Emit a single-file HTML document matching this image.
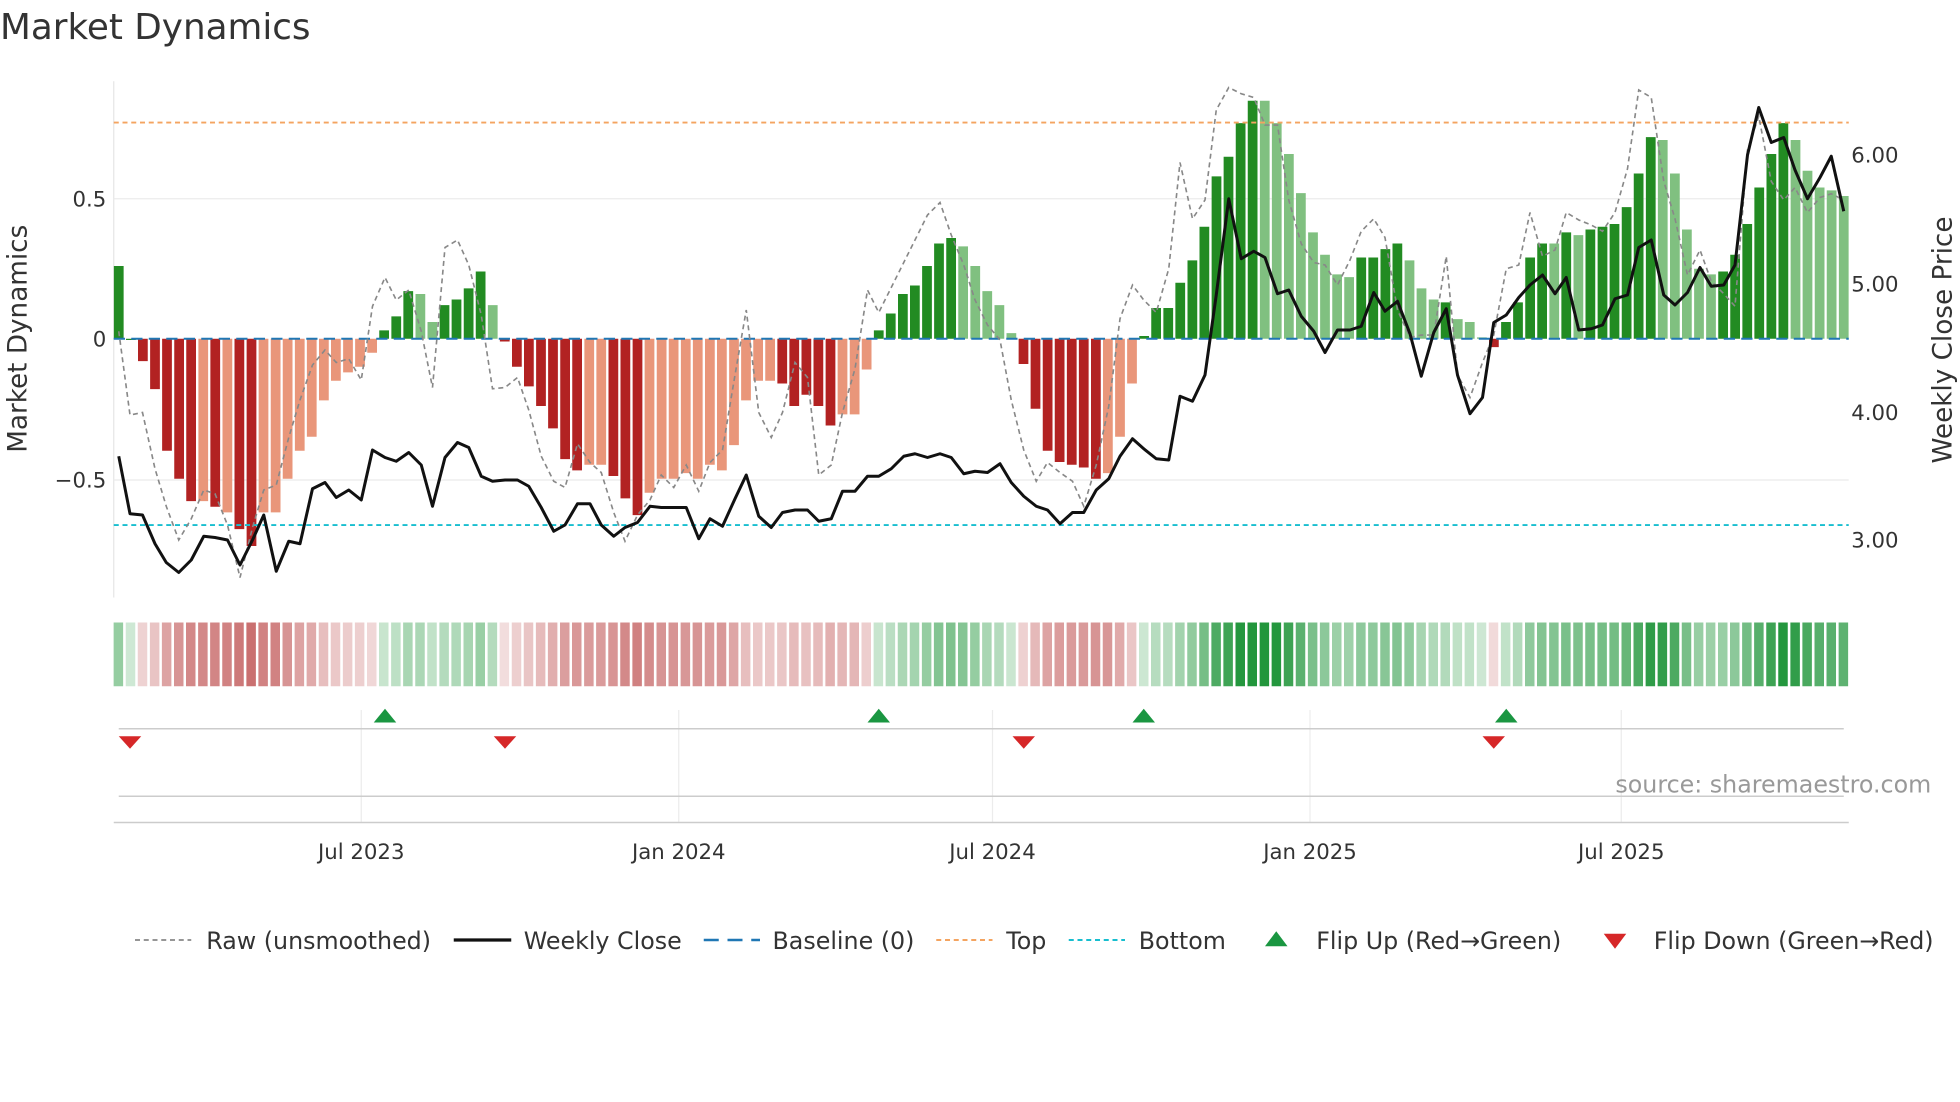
<!DOCTYPE html>
<html><head><meta charset="utf-8"><style>
html,body{margin:0;padding:0;background:#fff;overflow:hidden}
svg{display:block;font-family:"DejaVu Sans","Liberation Sans",sans-serif}
</style></head><body>
<svg id="s" width="1960" height="1102" viewBox="0 0 1568 881.6" xmlns="http://www.w3.org/2000/svg">
<rect width="1568" height="882" fill="#fff"/>
<text x="0" y="31" font-size="28.6" fill="#333">Market Dynamics</text>
<line x1="91" y1="65" x2="91" y2="478" stroke="#e6e6e6"/>
<line x1="91" y1="159" x2="1479" y2="159" stroke="#ebebeb"/>
<line x1="91" y1="384" x2="1479" y2="384" stroke="#ebebeb"/>
<g id="bars"></g>
<line x1="91" y1="271" x2="1479" y2="271" stroke="#1f77b4" stroke-width="1.6" stroke-dasharray="9,5"/>
<line x1="91" y1="98" x2="1479" y2="98" stroke="#f4a460" stroke-width="1.5" stroke-dasharray="4,3"/>
<line x1="91" y1="420" x2="1479" y2="420" stroke="#17becf" stroke-width="1.5" stroke-dasharray="4,3"/>
<polyline fill="none" stroke="#888" stroke-width="1.3" stroke-dasharray="4,3" points="95,265 104,332 114,330 124,375 133,405 143,432 153,415 163,392 172,395 182,420 192,462 202,422 211,392 221,388 231,350 240,320 250,292 260,280 269,290 279,287 289,304 298,245 308,222 317,240 327,232 337,265 346,310 356,198 366,192 375,212 385,252 394,311 404,310 414,302 423,328 433,365 443,385 452,390 462,355 472,370 481,378 491,410 500,433 510,412 520,400 529,380 539,390 549,372 559,393 568,370 578,360 588,300 597,248 607,330 617,350 626,330 636,290 646,302 655,380 665,372 674,330 684,295 694,232 703,250 713,230 723,210 732,192 742,172 752,162 761,188 771,212 780,240 790,260 800,272 809,320 819,360 829,385 838,370 848,378 858,385 867,405 877,372 887,325 896,255 906,228 915,240 925,250 935,215 944,130 954,175 964,160 973,88 983,70 993,75 1003,78 1012,100 1022,100 1031,160 1041,195 1051,210 1060,212 1070,228 1080,208 1089,185 1099,175 1108,190 1118,248 1128,270 1137,268 1147,268 1157,205 1166,300 1176,318 1186,290 1195,268 1205,215 1215,212 1224,170 1234,205 1244,200 1253,170 1263,176 1273,180 1282,185 1292,170 1302,135 1311,72 1321,78 1331,145 1340,175 1350,220 1360,200 1369,225 1379,235 1388,245 1398,120 1407,93 1417,145 1427,160 1436,150 1446,170 1456,158 1465,155 1475,160"/>
<polyline fill="none" stroke="#111" stroke-width="2.4" stroke-linejoin="round" points="95,365 104,411 114,412 124,435 133,450 143,458 153,448 163,429 172,430 182,432 192,452 202,432 211,412 221,457 231,433 240,435 250,391 260,386 269,398 279,392 289,400 298,360 308,366 317,369 327,362 337,372 346,405 356,366 366,354 375,358 385,381 394,385 404,384 414,384 423,389 433,406 443,425 452,420 462,403 472,403 481,420 491,429 500,422 510,418 520,405 529,406 539,406 549,406 559,431 568,415 578,421 588,399 597,380 607,413 617,422 626,410 636,408 646,408 655,417 665,415 674,393 684,393 694,381 703,381 713,375 723,365 732,363 742,366 752,363 761,366 771,379 780,377 790,378 800,371 809,386 819,397 829,405 838,408 848,419 858,410 867,410 877,392 887,383 896,365 906,351 915,359 925,367 935,368 944,317 954,321 964,300 973,236 983,159 993,207 1003,201 1012,206 1022,235 1031,232 1041,253 1051,265 1060,282 1070,264 1080,264 1089,261 1099,234 1108,249 1118,241 1128,267 1137,301 1147,266 1157,247 1166,300 1176,331 1186,318 1195,258 1205,252 1215,238 1224,228 1234,220 1244,235 1253,222 1263,264 1273,263 1282,260 1292,239 1302,236 1311,198 1321,192 1331,236 1340,244 1350,234 1360,214 1369,229 1379,228 1388,212 1398,124 1407,86 1417,114 1427,110 1436,136 1446,159 1456,142 1465,125 1475,169"/>
<g font-size="17" fill="#333" text-anchor="end">
<text x="85" y="165">0.5</text><text x="85" y="277">0</text><text x="85" y="390">−0.5</text>
</g>
<g font-size="17" fill="#333">
<text x="1481" y="130">6.00</text><text x="1481" y="233">5.00</text><text x="1481" y="336">4.00</text><text x="1481" y="438">3.00</text>
</g>
<text transform="translate(21,271) rotate(-90)" font-size="21" fill="#333" text-anchor="middle">Market Dynamics</text>
<text transform="translate(1561,272) rotate(-90)" font-size="21" fill="#333" text-anchor="middle">Weekly Close Price</text>
<g id="strip"></g>
<g stroke="#ececec">
<line x1="289" y1="568" x2="289" y2="658"/><line x1="543" y1="568" x2="543" y2="658"/><line x1="794" y1="568" x2="794" y2="658"/><line x1="1048" y1="568" x2="1048" y2="658"/><line x1="1297" y1="568" x2="1297" y2="658"/>
</g>
<line x1="95" y1="583" x2="1475" y2="583" stroke="#ccc" stroke-width="1.2"/>
<line x1="95" y1="637" x2="1475" y2="637" stroke="#ccc" stroke-width="1.2"/>
<line x1="91" y1="658" x2="1479" y2="658" stroke="#ccc" stroke-width="1.2"/>
<g fill="#1a9641">
<polygon points="299,578 317,578 308,567"/><polygon points="694,578 712,578 703,567"/><polygon points="906,578 924,578 915,567"/><polygon points="1196,578 1214,578 1205,567"/>
</g>
<g fill="#d62728">
<polygon points="95,589 113,589 104,599"/><polygon points="395,589 413,589 404,599"/><polygon points="810,589 828,589 819,599"/><polygon points="1186,589 1204,589 1195,599"/>
</g>
<text x="1545" y="634" font-size="19" fill="#999" text-anchor="end">source: sharemaestro.com</text>
<g font-size="17" fill="#333" text-anchor="middle">
<text x="289" y="687">Jul 2023</text><text x="543" y="687">Jan 2024</text><text x="794" y="687">Jul 2024</text><text x="1048" y="687">Jan 2025</text><text x="1297" y="687">Jul 2025</text>
</g>
<g font-size="19" fill="#333">
<line x1="108" y1="752" x2="153" y2="752" stroke="#888" stroke-width="1.4" stroke-dasharray="4,3"/>
<text x="165" y="759">Raw (unsmoothed)</text>
<line x1="363" y1="752" x2="409" y2="752" stroke="#111" stroke-width="2.6"/>
<text x="419" y="759">Weekly Close</text>
<line x1="563" y1="752" x2="608" y2="752" stroke="#1f77b4" stroke-width="2" stroke-dasharray="12,7"/>
<text x="618" y="759">Baseline (0)</text>
<line x1="749" y1="752" x2="794" y2="752" stroke="#f4a460" stroke-width="1.6" stroke-dasharray="4,3"/>
<text x="805" y="759">Top</text>
<line x1="855" y1="752" x2="900" y2="752" stroke="#17becf" stroke-width="1.6" stroke-dasharray="4,3"/>
<text x="911" y="759">Bottom</text>
<polygon points="1012,757 1030,757 1021,745" fill="#1a9641"/>
<text x="1053" y="759">Flip Up (Red→Green)</text>
<polygon points="1283,747 1301,747 1292,759" fill="#d62728"/>
<text x="1323" y="759">Flip Down (Green→Red)</text>
</g>
</svg>
<script>
var v=[[.26,1],[0,1],[-.08,1],[-.18,1],[-.4,1],[-.5,1],[-.58,1],[-.58,0],[-.6,1],[-.62,0],[-.68,1],[-.74,1],[-.62,0],[-.62,0],[-.5,0],[-.4,0],[-.35,0],[-.22,0],[-.15,0],[-.12,0],[-.1,0],[-.05,0],[.03,1],[.08,1],[.17,1],[.16,0],[.06,0],[.12,1],[.14,1],[.18,1],[.24,1],[.12,0],[-.01,1],[-.1,1],[-.17,1],[-.24,1],[-.32,1],[-.43,1],[-.47,1],[-.45,0],[-.45,0],[-.49,1],[-.57,1],[-.63,1],[-.55,0],[-.5,0],[-.5,0],[-.48,0],[-.5,0],[-.45,0],[-.47,0],[-.38,0],[-.22,0],[-.15,0],[-.15,0],[-.16,1],[-.24,1],[-.2,1],[-.24,1],[-.31,1],[-.27,0],[-.27,0],[-.11,0],[.03,1],[.09,1],[.16,1],[.19,1],[.26,1],[.34,1],[.36,1],[.33,0],[.26,0],[.17,0],[.12,0],[.02,0],[-.09,1],[-.25,1],[-.4,1],[-.44,1],[-.45,1],[-.46,1],[-.5,1],[-.48,0],[-.35,0],[-.16,0],[.01,1],[.11,1],[.11,1],[.2,1],[.28,1],[.4,1],[.58,1],[.65,1],[.77,1],[.85,1],[.85,0],[.77,0],[.66,0],[.52,0],[.38,0],[.3,0],[.23,0],[.22,0],[.29,1],[.29,1],[.32,1],[.34,1],[.28,0],[.18,0],[.14,0],[.13,1],[.07,0],[.06,0],[.005,0],[-.03,1],[.06,1],[.13,1],[.29,1],[.34,1],[.34,0],[.38,1],[.37,0],[.39,1],[.4,1],[.41,1],[.47,1],[.59,1],[.72,1],[.71,0],[.59,0],[.39,0],[.25,0],[.23,0],[.24,1],[.3,1],[.41,1],[.54,1],[.66,1],[.77,1],[.71,0],[.6,0],[.54,0],[.53,0],[.51,0]];
var n=v.length,x0=95,x1=1475,st=(x1-x0)/(n-1),b="",s="";
function mix(c,a){return "rgb("+c.map(function(k){return Math.round(255+(k-255)*a)}).join(",")+")"}
for(var i=0;i<n;i++){var x=x0+i*st,val=v[i][0],d=v[i][1],h=Math.abs(val)*224,c;
if(val>=0)c=d?"#228b22":"#80c080";else c=d?"#b22222":"#e9967a";
var y=val>=0?271-h:271;b+='<rect x="'+(x-3.9).toFixed(1)+'" y="'+y.toFixed(1)+'" width="7.8" height="'+Math.max(h,1).toFixed(1)+'" fill="'+c+'"/>';
var a=Math.min(1,.22+Math.abs(val)*1.0);var sc=val>=0?mix([34,150,60],a):mix([190,80,80],a*0.85);
s+='<rect x="'+(x-4.1).toFixed(1)+'" y="498" width="7.6" height="51" fill="'+sc+'"/>';}
document.getElementById("bars").innerHTML=b;document.getElementById("strip").innerHTML=s;
</script>
</body></html>
